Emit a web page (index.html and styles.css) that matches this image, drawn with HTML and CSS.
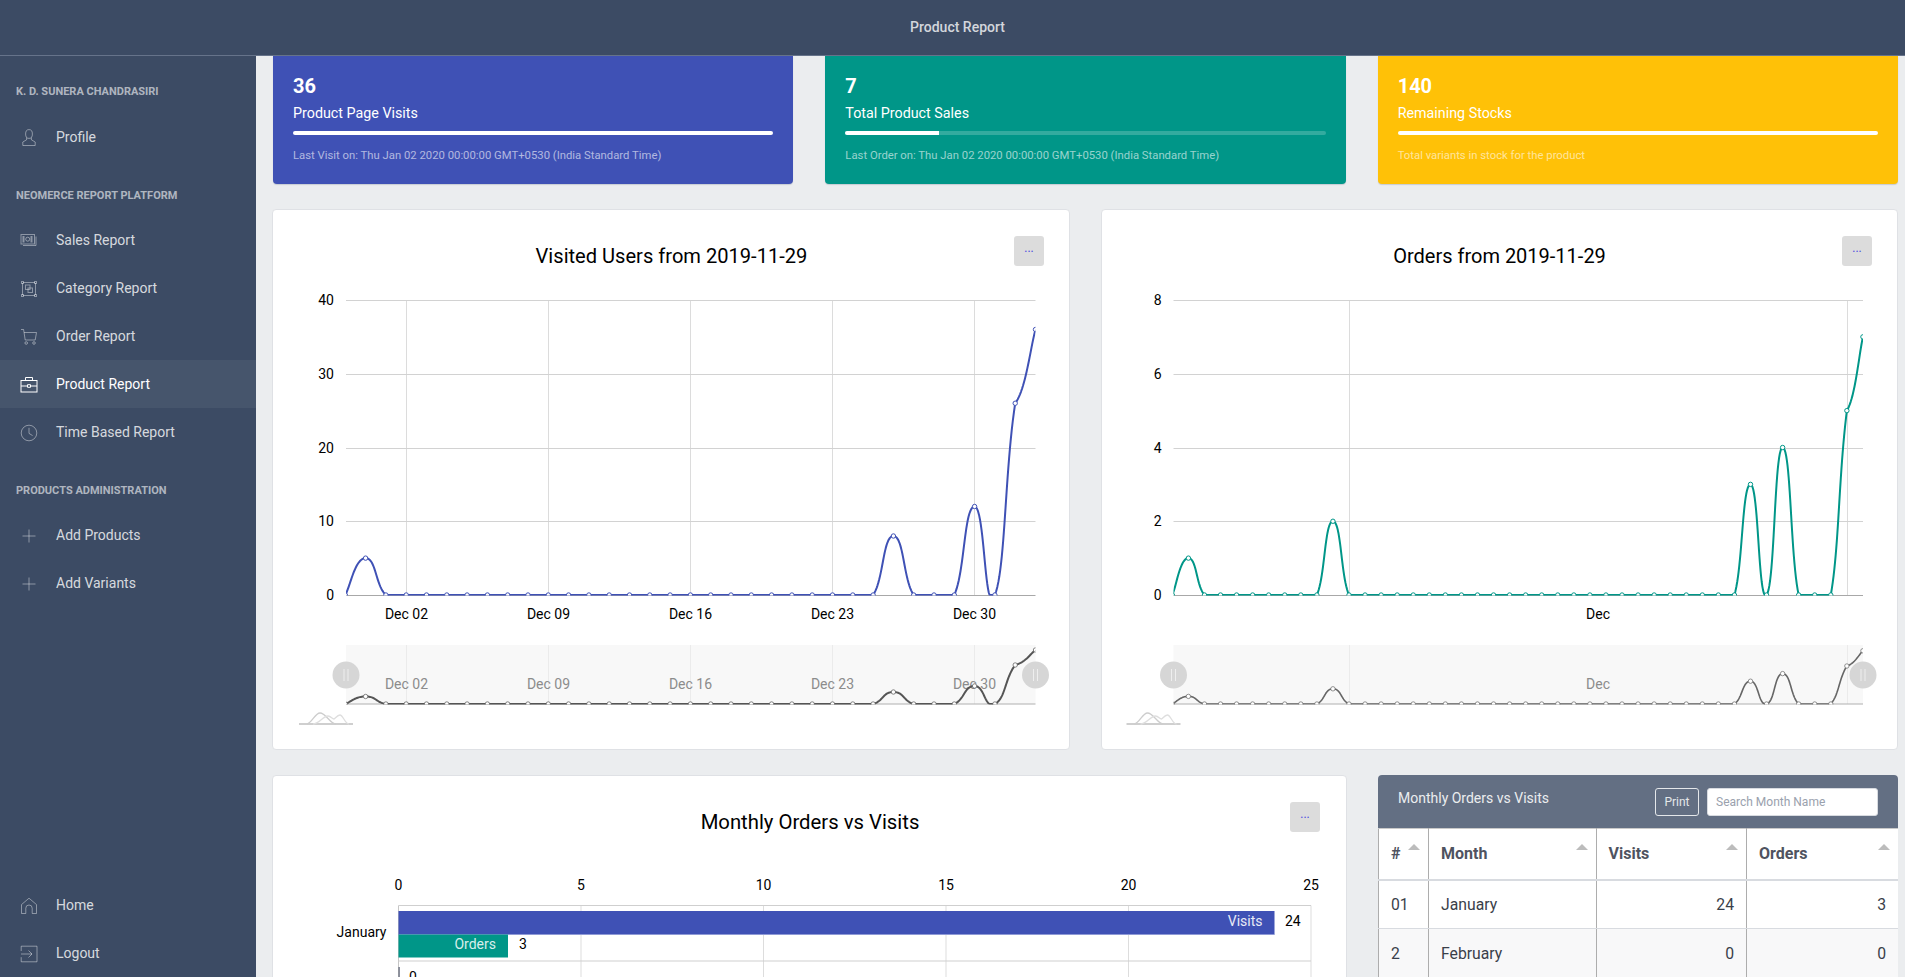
FILE: index.html
```html
<!DOCTYPE html>
<html lang="en">
<head>
<meta charset="utf-8">
<title>Product Report</title>
<link rel="stylesheet" href="styles.css">
</head>
<body>
<header class="topbar"><span class="topbar-title">Product Report</span></header>
<div class="layout">
  <nav class="sidebar">
    <div class="nav-title nav-title-first">K. D. Sunera Chandrasiri</div>
    <a class="nav-item"><svg class="nav-icon" viewBox="0 0 18 18"><ellipse cx="9" cy="5" rx="3.4" ry="4.4"/><path d="M6.6 8.6V10.8L2.8 13V16.5H15.2V13L11.4 10.8V8.6"/></svg>Profile</a>

    <div class="nav-title">Neomerce Report Platform</div>
    <a class="nav-item"><svg class="nav-icon" viewBox="0 0 18 18"><rect x="1" y="2.5" width="13.5" height="9.5"/><rect x="3" y="4.5" width="1" height="5.5"/><rect x="11" y="4.5" width="1" height="5.5"/><circle cx="7.7" cy="7.2" r="2"/><path d="M16 4.5V13.5H3"/></svg>Sales Report</a>
    <a class="nav-item"><svg class="nav-icon" viewBox="0 0 18 18"><path d="M3 2.5H15M3 15.5H15M2.5 3V15M15.5 3V15"/><rect x="1.5" y="1.5" width="2" height="2"/><rect x="14.5" y="1.5" width="2" height="2"/><rect x="1.5" y="14.5" width="2" height="2"/><rect x="14.5" y="14.5" width="2" height="2"/><rect x="5.5" y="5" width="4.5" height="4.5"/><rect x="8" y="8" width="4.5" height="4.5"/></svg>Category Report</a>
    <a class="nav-item"><svg class="nav-icon" viewBox="0 0 18 18"><path d="M1 1.5H3.6L5.2 12H15.2L16.5 4.5H4"/><circle cx="6.2" cy="15" r="1.3"/><circle cx="14" cy="15" r="1.3"/></svg>Order Report</a>
    <a class="nav-item nav-item-active"><svg class="nav-icon" viewBox="0 0 18 18"><rect x="1" y="4.5" width="16" height="11.5"/><path d="M5.5 4.5V1.5H12.5V4.5M1 10H7.5M10.5 10H17M7.5 8.7H10.5V11.3H7.5Z"/></svg>Product Report</a>
    <a class="nav-item"><svg class="nav-icon" viewBox="0 0 18 18"><circle cx="9" cy="9" r="7.8"/><path d="M9 3.8V9.4L12.6 11.6"/></svg>Time Based Report</a>

    <div class="nav-title">Products Administration</div>
    <a class="nav-item"><svg class="nav-icon" viewBox="0 0 18 18"><path d="M9 2.5V15.5M2.5 9H15.5"/></svg>Add Products</a>
    <a class="nav-item"><svg class="nav-icon" viewBox="0 0 18 18"><path d="M9 2.5V15.5M2.5 9H15.5"/></svg>Add Variants</a>

    <div class="nav-bottom">
      <a class="nav-item"><svg class="nav-icon" viewBox="0 0 18 18"><path d="M1.5 16.5V7.6L9 1.2L16.5 7.6V16.5H12.2V11.2A3.2 3.2 0 0 0 5.8 11.2V16.5Z"/></svg>Home</a>
      <a class="nav-item"><svg class="nav-icon" viewBox="0 0 18 18"><path d="M1.2 6V1.2H17V16.8H1.2V12.2M1 9H12M8.5 5.5L12 9L8.5 12.5"/></svg>Logout</a>
    </div>
  </nav>

  <main class="content">
    <section class="stat-row">
      <article class="stat stat-indigo">
        <div class="stat-value">36</div>
        <div class="stat-label">Product Page Visits</div>
        <div class="stat-track"><div class="stat-fill" style="width:100%"></div></div>
        <div class="stat-note">Last Visit on: Thu Jan 02 2020 00:00:00 GMT+0530 (India Standard Time)</div>
      </article>
      <article class="stat stat-teal">
        <div class="stat-value">7</div>
        <div class="stat-label">Total Product Sales</div>
        <div class="stat-track"><div class="stat-fill" style="width:19.5%"></div></div>
        <div class="stat-note">Last Order on: Thu Jan 02 2020 00:00:00 GMT+0530 (India Standard Time)</div>
      </article>
      <article class="stat stat-amber">
        <div class="stat-value">140</div>
        <div class="stat-label">Remaining Stocks</div>
        <div class="stat-track"><div class="stat-fill" style="width:100%"></div></div>
        <div class="stat-note">Total variants in stock for the product</div>
      </article>
    </section>

    <section class="chart-row">
      <article class="card chart-card">
        <button class="more-btn" type="button">...</button>
        <svg id="visits-chart" class="chart-svg" viewBox="273 210 796 539"></svg>
      </article>
      <article class="card chart-card">
        <button class="more-btn" type="button">...</button>
        <svg id="orders-chart" class="chart-svg" viewBox="1102 210 795 539"></svg>
      </article>
    </section>

    <section class="bottom-row">
      <article class="card bar-card">
        <button class="more-btn" type="button">...</button>
        <svg id="monthly-chart" class="chart-svg" viewBox="273 776 1073 600"></svg>
      </article>
      <article class="card table-card">
        <div class="table-head">
          <span class="table-title">Monthly Orders vs Visits</span>
          <div class="table-tools">
            <button class="print-btn" type="button">Print</button>
            <input class="search-input" type="text" placeholder="Search Month Name">
          </div>
        </div>
        <table class="month-table">
          <colgroup><col class="col-num"><col class="col-month"><col class="col-visits"><col class="col-orders"></colgroup>
          <thead>
            <tr><th>#</th><th>Month</th><th>Visits</th><th>Orders</th></tr>
          </thead>
          <tbody>
            <tr><td>01</td><td>January</td><td class="num">24</td><td class="num">3</td></tr>
            <tr class="row-alt"><td>2</td><td>February</td><td class="num">0</td><td class="num">0</td></tr>
          </tbody>
        </table>
      </article>
    </section>
  </main>
</div>
<script src="charts.js"></script>
</body>
</html>
```

FILE: styles.css
```css
* { box-sizing: border-box; }

html, body {
  margin: 0;
  height: 100%;
  overflow: hidden;
}

body {
  display: flex;
  flex-direction: column;
  font-family: Roboto, "Liberation Sans", sans-serif;
  font-size: 14px;
  line-height: 1.5;
  color: #3c4b64;
  background: #ebedef;
}

/* Top bar */
.topbar {
  flex: 0 0 56px;
  display: flex;
  align-items: center;
  justify-content: center;
  padding: 0 0 0 10px;
  background: #3c4b64;
  border-bottom: 1px solid #66738a;
}

.topbar-title {
  font-size: 14px;
  font-weight: 500;
  color: #d3d6dc;
}

.layout {
  flex: 1;
  min-height: 0;
  display: flex;
  overflow: hidden;
}

/* Sidebar */
.sidebar {
  flex: 0 0 256px;
  display: flex;
  flex-direction: column;
  padding-top: 2px;
  overflow: hidden;
  background: #3c4b64;
}

.nav-title {
  flex: none;
  height: 42px;
  margin-top: 13px;
  padding-left: 16px;
  display: flex;
  align-items: center;
  font-size: 11px;
  font-weight: 700;
  line-height: 1;
  text-transform: uppercase;
  color: rgba(255, 255, 255, 0.6);
}

.nav-title-first {
  padding-bottom: 2px;
}

.nav-item {
  flex: none;
  height: 48px;
  display: flex;
  align-items: center;
  padding: 1px 0 0 19.5px;
  color: rgba(255, 255, 255, 0.8);
}

.nav-item-active {
  background: #46556c;
  color: #fff;
}

.nav-icon {
  flex: 0 0 18px;
  width: 18px;
  height: 18px;
  margin-right: 18.5px;
  fill: none;
  stroke: rgba(255, 255, 255, 0.42);
  stroke-width: 1;
}

.nav-item-active .nav-icon {
  stroke: #fff;
}

.nav-bottom {
  flex: none;
  margin-top: auto;
}

/* Content */
.content {
  flex: 1;
  min-width: 0;
  overflow: hidden;
  padding: 0 7px 0 16px;
  display: flex;
  flex-direction: column;
  gap: 25px;
}

.stat-row {
  flex: none;
  margin-left: 1px;
  display: grid;
  grid-template-columns: repeat(3, 1fr);
  gap: 32px;
}

.stat {
  height: 128px;
  padding: 15px 20px 0;
  border-radius: 0 0 4px 4px;
  color: #fff;
  box-shadow: 0 1px 1px rgba(60, 75, 100, 0.2);
}

.stat-indigo { background: #3f51b5; }
.stat-teal { background: #009688; }
.stat-amber { background: #ffc107; }

.stat-value {
  font-size: 20px;
  font-weight: 700;
  line-height: 30px;
}

.stat-label {
  margin-top: 2px;
  font-size: 14.3px;
  line-height: 21px;
}

.stat-track {
  height: 4px;
  margin-top: 7px;
  border-radius: 2px;
  background: rgba(255, 255, 255, 0.2);
  overflow: hidden;
}

.stat-fill {
  height: 100%;
  background: #fff;
}

.stat-note {
  margin-top: 12px;
  font-size: 11.3px;
  line-height: 17px;
  color: rgba(255, 255, 255, 0.6);
}

.card {
  position: relative;
  background: #fff;
  border: 1px solid #dfe1e5;
  border-radius: 4px;
}

.chart-row {
  flex: none;
  display: grid;
  grid-template-columns: 798px 1fr;
  gap: 31px;
}

.chart-card {
  height: 541px;
}

.chart-svg {
  display: block;
  width: 100%;
  height: 100%;
  font-family: Roboto, "Liberation Sans", sans-serif;
}

.more-btn {
  position: absolute;
  top: 26px;
  right: 25px;
  width: 30px;
  height: 30px;
  padding: 0 0 6px;
  border: 0;
  border-radius: 3px;
  background: #dcdcdc;
  color: #4a4ae0;
  font: 12px/1 Roboto, sans-serif;
}

.bar-card .more-btn {
  right: 26px;
}

.bottom-row {
  flex: none;
  display: grid;
  grid-template-columns: 1fr 520px;
  gap: 31px;
}

.bar-card {
  height: 602px;
}

.table-card {
  height: 400px;
  overflow: hidden;
  border: 0;
}

.table-head {
  height: 53px;
  display: flex;
  justify-content: space-between;
  padding: 13px 20px 0;
  background: #636f83;
  color: #ebedef;
}

.table-title {
  line-height: 21px;
}

.table-tools {
  display: flex;
  gap: 8px;
}

.print-btn {
  width: 44px;
  height: 28px;
  padding: 0;
  background: transparent;
  border: 1px solid #e4e7ea;
  border-radius: 3px;
  color: #e4e7ea;
  font: 12px Roboto, sans-serif;
}

.search-input {
  width: 171px;
  height: 28px;
  padding: 0 8px;
  border: 1px solid #d8dbe0;
  border-radius: 3px;
  background: #fff;
  font: 12px Roboto, sans-serif;
}

.search-input::placeholder {
  color: #9aa1ad;
  opacity: 1;
}

.month-table {
  width: 100%;
  table-layout: fixed;
  border-collapse: collapse;
  font-size: 15.75px;
  color: #3a3f4a;
}

.col-num { width: 50px; }
.col-month { width: 167.5px; }
.col-visits { width: 150.5px; }
.col-orders { width: 152px; }

.month-table th,
.month-table td {
  padding: 0 12px;
  border-left: 1px solid #adadad;
  border-right: 1px solid #adadad;
  text-align: left;
}

.month-table th {
  position: relative;
  height: 51px;
  border-top: 1px solid #c9c9c9;
  border-bottom: 2px solid #d8dbe0;
  font-weight: 700;
  font-size: 16px;
  color: #4f5360;
}

/* sort caret */
.month-table th::after {
  content: "";
  position: absolute;
  top: 15px;
  right: 8px;
  border-left: 6px solid transparent;
  border-right: 6px solid transparent;
  border-bottom: 6px solid #bcbcbc;
}

.month-table td {
  height: 49px;
  padding-top: 1px;
  border-bottom: 1px solid #d8dbe0;
}

.month-table td.num {
  text-align: right;
}

.row-alt td {
  background: #f8f8f9;
}
```

FILE: charts.js
```js
(function () {
  var NS = 'http://www.w3.org/2000/svg';
  var clipId = 0;

  function el(parent, name, attrs, text) {
    var n = document.createElementNS(NS, name);
    for (var k in attrs) n.setAttribute(k, attrs[k]);
    if (text !== undefined) n.textContent = text;
    parent.appendChild(n);
    return n;
  }

  function line(p, x1, y1, x2, y2, color, w) {
    el(p, 'line', { x1: x1, y1: y1, x2: x2, y2: y2, stroke: color, 'stroke-width': w || 1 });
  }

  function label(p, x, y, str, color, anchor, size) {
    el(p, 'text', {
      x: x, y: y, fill: color || '#000', 'text-anchor': anchor || 'middle',
      'font-size': size || 14
    }, str);
  }

  /* Smoothed curve through the points, sampled and held at the axis so the
     undershoot next to each peak runs along the baseline. On a steady climb the
     outgoing handle is damped, which gives the shoulder the chart library draws. */
  function smooth(pts, floor) {
    var f = 0.26, out = [];
    for (var i = 0; i < pts.length - 1; i++) {
      var p0 = pts[i - 1] || pts[i], p1 = pts[i], p2 = pts[i + 1], p3 = pts[i + 2] || p2;
      var rising = p0[1] > p1[1] && p1[1] > p2[1];
      var c1x = p1[0] + (p2[0] - p0[0]) * f;
      var c1y = p1[1] + (p2[1] - p0[1]) * f * (rising ? 0.2 : 1);
      var c2x = p2[0] - (p3[0] - p1[0]) * f, c2y = p2[1] - (p3[1] - p1[1]) * f;
      for (var s = 0; s < 24; s++) {
        var t = s / 24, u = 1 - t;
        var x = u * u * u * p1[0] + 3 * u * u * t * c1x + 3 * u * t * t * c2x + t * t * t * p2[0];
        var y = u * u * u * p1[1] + 3 * u * u * t * c1y + 3 * u * t * t * c2y + t * t * t * p2[1];
        out.push(x.toFixed(2) + ' ' + Math.min(y, floor).toFixed(2));
      }
    }
    var last = pts[pts.length - 1];
    out.push(last[0] + ' ' + last[1]);
    return 'M' + out.join('L');
  }

  function series(svg, pts, left, right, top, bottom, color, width, markerOpacity) {
    var id = 'clip' + (++clipId);
    var clip = el(svg, 'clipPath', { id: id });
    el(clip, 'rect', { x: left, y: top, width: right - left, height: bottom - top + 0.5 });
    var g = el(svg, 'g', { 'clip-path': 'url(#' + id + ')' });
    el(g, 'path', { d: smooth(pts, bottom), fill: 'none', stroke: color, 'stroke-width': width, 'stroke-linejoin': 'round' });
    pts.forEach(function (p) {
      el(g, 'circle', {
        cx: p[0], cy: p[1], r: 2.2, fill: '#fff', stroke: color, 'stroke-width': 1,
        'stroke-opacity': markerOpacity
      });
    });
  }

  function handle(svg, cx, cy) {
    el(svg, 'circle', { cx: cx, cy: cy, r: 13.5, fill: '#d6d6d6' });
    line(svg, cx - 2, cy - 6, cx - 2, cy + 6, '#eeeeee', 1);
    line(svg, cx + 2, cy - 6, cx + 2, cy + 6, '#eeeeee', 1);
  }

  function lineChart(cfg) {
    var svg = document.getElementById(cfg.id);
    var L = cfg.left, R = cfg.right;
    var T = 300, B = 595, step = (B - T) / 4;

    label(svg, cfg.centre, 263, cfg.title, '#000', 'middle', cfg.titleSize);

    cfg.ticks.forEach(function (t) { line(svg, t.x, T, t.x, B, '#dcdcdc', 1); });
    cfg.yLabels.forEach(function (v, i) {
      var y = T + i * step;
      var snapped = Math.round(y) + 0.5;
      line(svg, L, snapped, R, snapped, i === 4 ? '#a8a8a8' : '#d2d2d2', 1);
      label(svg, L - 12, y + 5, v, '#000', 'end');
    });
    cfg.ticks.forEach(function (t) { label(svg, t.labelX || t.x, 619, t.text, '#000'); });

    var pts = cfg.data.map(function (v, i) {
      return [cfg.x0 + i * cfg.dx, B - v * (B - T) / cfg.max];
    });
    series(svg, pts, L, R, T, B, cfg.color, 2, 1);

    /* range filter below the plot */
    var mT = 645, mB = 704;
    el(svg, 'rect', { x: L, y: mT, width: R - L, height: mB - mT, fill: '#f8f8f8' });
    cfg.ticks.forEach(function (t) { line(svg, t.x, mT, t.x, mB, '#ebebeb', 1); });
    cfg.ticks.forEach(function (t) { label(svg, t.labelX || t.x, 689, t.text, '#8c8c8c'); });
    line(svg, L, mB, R, mB, '#b0b0b0', 1);
    var mini = cfg.data.map(function (v, i) {
      return [cfg.x0 + i * cfg.dx, mB - v * cfg.miniScale];
    });
    series(svg, mini, L, R, mT, mB, cfg.miniColor, cfg.miniWidth, 0.7);
    handle(svg, L, 675);
    handle(svg, R, 675);

    /* little preview glyph of the range filter */
    var g = el(svg, 'g', { transform: 'translate(' + (L - 47) + ' 712)', fill: 'none' });
    el(g, 'path', { d: 'M0 12H54', stroke: '#cfcfcf', 'stroke-width': 2 });
    el(g, 'path', { d: 'M8 12C13 11 16 1 21 1C27 1 31 12 37 12', stroke: '#cdcdcd', 'stroke-width': 1.3 });
    el(g, 'path', { d: 'M14 12C20 12 24 4 29 4C32 4 33 7 35 7C36 7 38 3 41 3C44 3 46 12 50 12', stroke: '#dedede', 'stroke-width': 1.3 });
  }

  function zeros(n, set) {
    var a = [];
    for (var i = 0; i < n; i++) a.push(set[i] || 0);
    return a;
  }

  /* Nov 29 .. Jan 2, one point a day */
  var dx1 = 20.3, dec2 = 406.2;
  lineChart({
    id: 'visits-chart', title: 'Visited Users from 2019-11-29', centre: 671.5, titleSize: 20.1,
    left: 346, right: 1035.5, x0: dec2 - 3 * dx1, dx: dx1, max: 40,
    yLabels: ['40', '30', '20', '10', '0'],
    data: zeros(35, { 1: 5, 27: 8, 31: 12, 33: 26, 34: 36 }),
    ticks: [
      { x: 406.5, text: 'Dec 02' }, { x: 548.5, text: 'Dec 09' }, { x: 690.5, text: 'Dec 16' },
      { x: 832.5, text: 'Dec 23' }, { x: 974.5, text: 'Dec 30' }
    ],
    color: '#3f51b5', miniColor: '#555555', miniWidth: 2, miniScale: 1.5
  });

  /* Nov 20 .. Jan 2 */
  var dx2 = 16.06, dec1 = 1349;
  lineChart({
    id: 'orders-chart', title: 'Orders from 2019-11-29', centre: 1499.5, titleSize: 20,
    left: 1173.5, right: 1863, x0: dec1 - 11 * dx2, dx: dx2, max: 8,
    yLabels: ['8', '6', '4', '2', '0'],
    data: zeros(44, { 1: 1, 10: 2, 36: 3, 38: 4, 42: 5, 43: 7 }),
    ticks: [
      { x: 1349.5, labelX: 1598, text: 'Dec' }, { x: 1847.5, labelX: 1598, text: '' }
    ],
    color: '#009688', miniColor: '#666666', miniWidth: 1.6, miniScale: 7.6
  });

  /* horizontal bars */
  (function () {
    var svg = document.getElementById('monthly-chart');
    var x0 = 398.5, unit = 36.5, T = 905.5, row = 56;
    label(svg, 810, 829, 'Monthly Orders vs Visits', '#000', 'middle', 20.3);
    [0, 5, 10, 15, 20, 25].forEach(function (v) {
      var x = x0 + v * unit;
      line(svg, x, T, x, 1100, v === 0 ? '#c6c6c6' : '#dddddd', 1);
      label(svg, x, 890, String(v));
    });
    line(svg, x0, T, x0 + 25 * unit, T, '#cfcfcf', 1);
    line(svg, x0, T + row - 0.5, x0 + 25 * unit, T + row - 0.5, '#cfcfcf', 1);

    el(svg, 'rect', { x: x0, y: 911, width: 24 * unit, height: 23.5, fill: '#3f51b5' });
    line(svg, x0, 934.5, x0 + 24 * unit, 934.5, '#8f9ad6', 1);
    el(svg, 'rect', { x: x0, y: 934.5, width: 3 * unit, height: 23, fill: '#009688' });
    label(svg, 1262.5, 926, 'Visits', '#e8eaf6', 'end');
    label(svg, 496, 949, 'Orders', '#d8efec', 'end');
    label(svg, 1285, 926, '24', '#000', 'start');
    label(svg, 519, 949, '3', '#000', 'start');
    label(svg, 386.5, 937, 'January', '#000', 'end');

    el(svg, 'rect', { x: x0, y: 967, width: 1.2, height: 24, fill: '#5a6072' });
    label(svg, 409, 982, '0', '#000', 'start');
  })();
})();
```
